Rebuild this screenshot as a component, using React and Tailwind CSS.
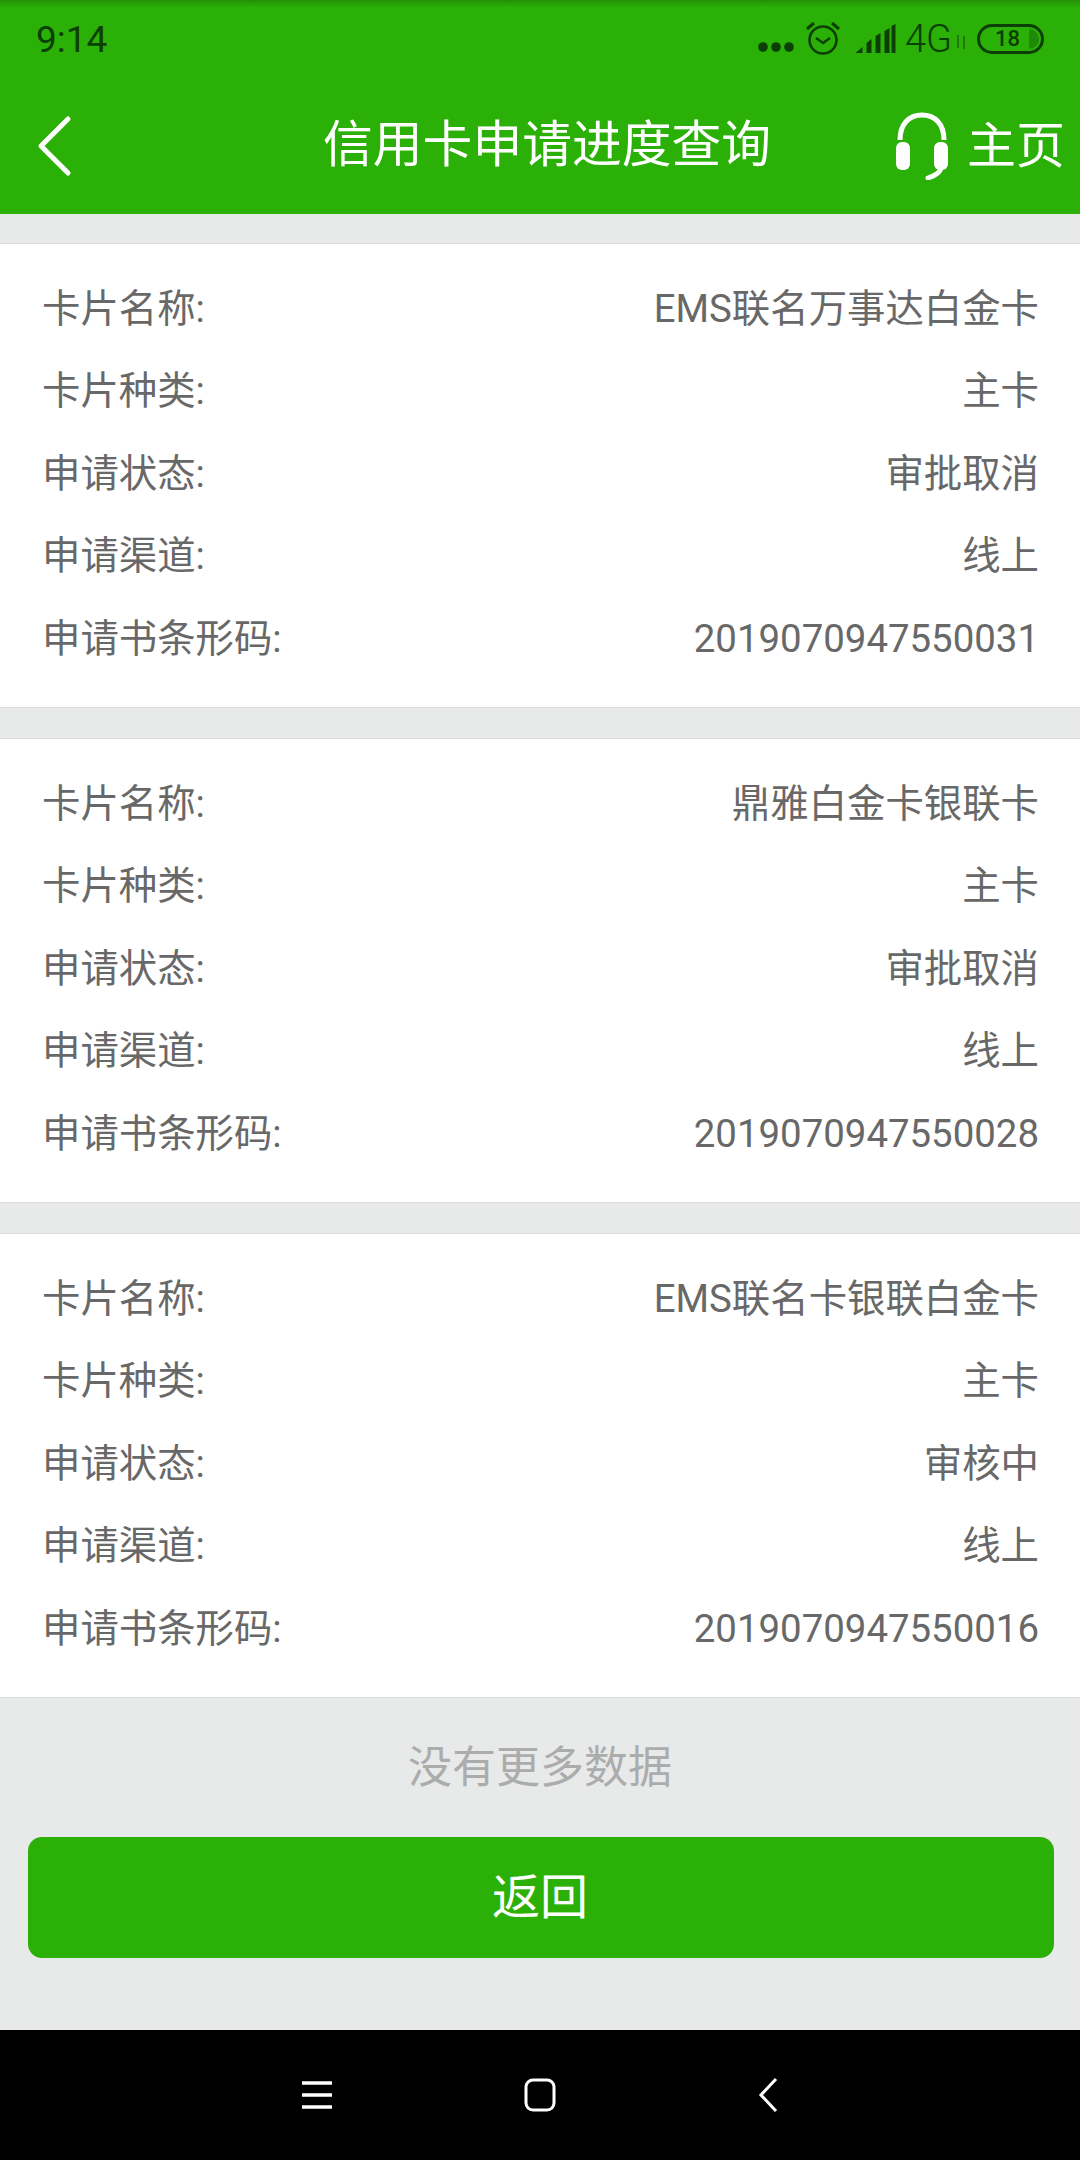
const FONT = { fontFamily: '"Roboto", "Noto Sans CJK SC", sans-serif' };

const cards = [
  ["EMS联名万事达白金卡", "主卡", "审批取消", "线上", "2019070947550031"],
  ["鼎雅白金卡银联卡", "主卡", "审批取消", "线上", "2019070947550028"],
  ["EMS联名卡银联白金卡", "主卡", "审核中", "线上", "2019070947550016"],
];
const labels = ["卡片名称:", "卡片种类:", "申请状态:", "申请渠道:", "申请书条形码:"];

function StatusBar() {
  return (
    <div className="flex h-[78px] items-center justify-between pl-[36px] pr-[36px] text-[#0c3f06] bg-gradient-to-b from-[#239006] to-[#2bb007] to-[10%]">
      <span className="text-[37px] leading-none">9:14</span>
      <div className="flex items-center">
        <svg className="mt-[16px]" width="36" height="14" viewBox="0 0 36 14" fill="#0c3f06">
          <circle cx="5" cy="7" r="4.8" /><circle cx="18" cy="7" r="4.8" /><circle cx="31" cy="7" r="4.8" />
        </svg>
        <svg className="ml-[11px] mb-[2px]" width="36" height="36" viewBox="0 0 36 36" fill="none" stroke="#0c3f06" strokeWidth="2.6">
          <circle cx="18" cy="20" r="13.5" />
          <path d="M11 18l7 5 7-5" />
          <path d="M2 9l7-6M34 9l-7-6" strokeWidth="3" />
        </svg>
        <svg className="ml-[13px]" width="43" height="30" viewBox="0 0 42 30" fill="#0c3f06">
          <path d="M1 29l7-6v6zM12 19l5-4v14h-5zM21 12l5-3v20h-5zM30 7l5-3v25h-5zM37 2l4-2v29h-4z" />
        </svg>
        <span className="ml-[8px] text-[38px] font-light leading-none">4G</span>
        <svg className="ml-[3px] mt-[6px]" width="12" height="14" viewBox="0 0 12 14" stroke="#1f7a0a" strokeWidth="2" fill="none">
          <path d="M3 0v13M9 1v13" />
        </svg>
        <div className="relative ml-[10px] flex h-[30px] w-[67px] items-center justify-center rounded-full border-[3px] border-[#0c3f06] pr-[6px] text-[22px] font-medium leading-none">
          18
          <div className="absolute bottom-[2px] right-[2px] top-[2px] w-[10px] rounded-r-full bg-[#1f8a08]" />
        </div>
      </div>
    </div>
  );
}

function Header() {
  return (
    <div className="flex h-[136px] items-center text-white">
      <svg className="ml-[36px]" width="40" height="62" viewBox="0 0 40 62" fill="none" stroke="white" strokeWidth="5" strokeLinecap="round" strokeLinejoin="round">
        <path d="M32 4L5 31l27 27" />
      </svg>
      <div className="ml-[247px] w-[451px] whitespace-nowrap text-[49.8px] leading-none">信用卡申请进度查询</div>
      <svg className="ml-[121px]" width="54" height="68" viewBox="0 0 54 68" fill="none">
        <path d="M5 28C5 12 14 3 27 3s22 9 22 25" stroke="white" strokeWidth="5" />
        <rect x="1" y="30" width="14" height="28" rx="6" fill="white" />
        <rect x="39" y="30" width="14" height="28" rx="6" fill="white" />
        <path d="M46 56c-1 5-7 8-13 10" stroke="white" strokeWidth="5" strokeLinecap="round" />
      </svg>
      <span className="ml-[18px] whitespace-nowrap text-[49px] leading-none">主页</span>
    </div>
  );
}

function Card({ values }) {
  return (
    <div className="flex h-[465px] flex-col justify-center border-y border-[#dcdedd] bg-white pb-[3px] pl-[42px] pr-[41px]">
      {labels.map((label, i) => (
        <div key={label} className="flex h-[82.5px] items-center justify-between text-[38.4px] leading-none text-[#686868]">
          <span>{label}</span>
          <span>{values[i]}</span>
        </div>
      ))}
    </div>
  );
}

export default function App() {
  return (
    <div className="flex h-[2160px] w-[1080px] flex-col overflow-hidden bg-[#e8eaea]" style={FONT}>
      <div className="bg-[#2bb007]">
        <StatusBar />
        <Header />
      </div>
      <div className="flex flex-col gap-[30px] pt-[29px]">
        {cards.map((c) => <Card key={c[4]} values={c} />)}
      </div>
      <div className="mt-[48px] text-center text-[44px] leading-none text-[#acacac]">没有更多数据</div>
      <div className="ml-[28px] mr-[26px] mt-[47px] flex h-[121px] items-center justify-center rounded-[14px] bg-[#2bb007] pr-[2px] text-[48px] text-white">返回</div>
      <div className="mt-auto flex h-[130px] items-center justify-center bg-black">
        <svg width="30" height="28" viewBox="0 0 30 28" fill="none" stroke="white" strokeWidth="3.5">
          <path d="M0 2h30M0 14h30M0 26h30" />
        </svg>
        <svg className="ml-[192px]" width="32" height="34" viewBox="0 0 32 34" fill="none" stroke="white" strokeWidth="3">
          <rect x="2" y="2" width="28" height="30" rx="7" />
        </svg>
        <svg className="ml-[202px]" width="20" height="34" viewBox="0 0 20 34" fill="none" stroke="white" strokeWidth="3">
          <path d="M18 1L3 17l15 16" />
        </svg>
      </div>
    </div>
  );
}
